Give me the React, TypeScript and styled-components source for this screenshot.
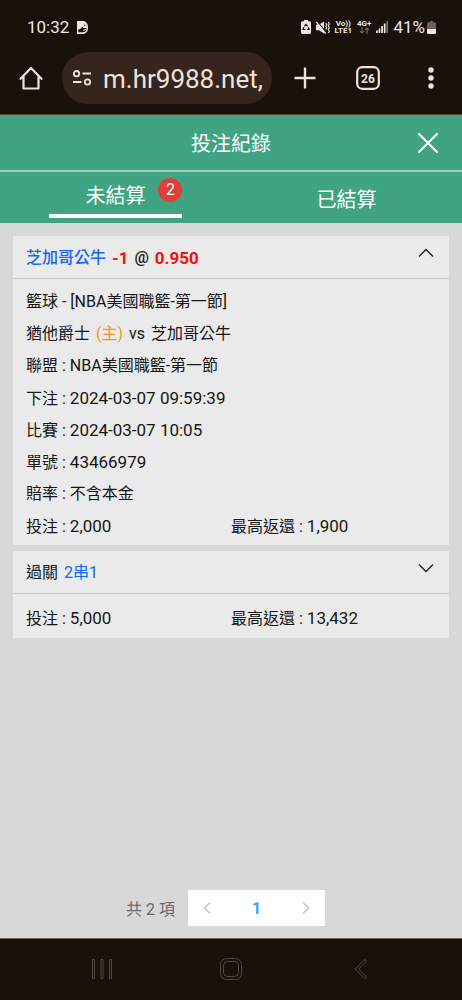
import React, { useState } from "react";
import styled, { createGlobalStyle } from "styled-components";

const colors = {
  bar: "#1a110b",
  pill: "#36251d",
  barText: "#efe2dc",
  green: "#40a381",
  page: "#d8d8d8",
  card: "#eaeaea",
  line: "#cbcbcb",
  blue: "#1467f5",
  red: "#fb0d0d",
  orange: "#ff920f",
};

const GlobalStyle = createGlobalStyle`
  * { box-sizing: border-box; }
  body {
    margin: 0;
    background: ${colors.page};
    color: #161616;
    font-family: Roboto, "Noto Sans CJK TC", sans-serif;
    font-size: 16px;
  }
  button, input { font-family: inherit; }
`;

const Screen = styled.div`
  display: flex;
  flex-direction: column;
  min-height: 100vh;
`;

const PlainButton = styled.button`
  display: flex;
  align-items: center;
  justify-content: center;
  padding: 0;
  border: 0;
  background: none;
  color: inherit;
  cursor: pointer;
`;

/* Phone status bar */
const StatusBar = styled.div`
  display: flex;
  align-items: center;
  justify-content: space-between;
  height: 52px;
  padding: 2px 26px 0 27px;
  background: ${colors.bar};
  color: #ece8e6;
  font-size: 17px;
`;

const StatusGroup = styled.div<{ $gap: number }>`
  display: flex;
  align-items: center;
  gap: ${(p) => p.$gap}px;
`;

const Network = styled.div`
  display: flex;
  flex-direction: column;
  align-items: center;
  font-size: 8px;
  font-weight: 700;
  line-height: 7px;
`;

const Battery = styled.div`
  display: flex;
  align-items: center;
  gap: 2px;
`;

/* Browser toolbar */
const Toolbar = styled.div`
  display: flex;
  align-items: center;
  padding: 0 11px 10px;
  border-bottom: 1px solid #5b463a;
  background: ${colors.bar};
  color: ${colors.barText};
`;

const ToolButton = styled(PlainButton)`
  width: 40px;
  height: 40px;
  flex: none;
`;

const AddressPill = styled.label`
  display: flex;
  align-items: center;
  flex: 1;
  min-width: 0;
  gap: 11px;
  height: 52px;
  margin: 0 13px 0 11px;
  padding: 0 9px 0 10px;
  border-radius: 26px;
  background: ${colors.pill};
`;

const Address = styled.input`
  flex: 1;
  min-width: 0;
  height: 40px;
  padding: 2px 0 0;
  border: 0;
  outline: 0;
  background: none;
  color: inherit;
  font-size: 26px;
`;

const ToolActions = styled.div`
  display: flex;
  gap: 23px;
`;

/* Page header and tabs */
const Header = styled.header`
  display: grid;
  grid-template-columns: 48px 1fr 48px;
  align-items: center;
  height: 57px;
  padding: 0 10px;
  border-bottom: 2px solid #a0cfbd;
  background: ${colors.green};
  color: #fff;
`;

const Title = styled.h1`
  grid-column: 2;
  margin: 0;
  padding-top: 2px;
  font-size: 20px;
  font-weight: 400;
  line-height: 30px;
  text-align: center;
`;

const CloseButton = styled(PlainButton)`
  height: 40px;
`;

const Tabs = styled.div`
  display: flex;
  height: 51px;
  background: ${colors.green};
`;

const Tab = styled(PlainButton)`
  flex: 1;
  color: #fff;
  font-size: 20px;
`;

const TabLabel = styled.span<{ $active: boolean }>`
  position: relative;
  width: 58%;
  padding: ${(p) => (p.$active ? "2px 0" : "4px 0 0")};
  border-bottom: ${(p) => (p.$active ? "4px solid #fff" : "0")};
  line-height: 32px;
`;

const Badge = styled.span`
  position: absolute;
  top: 0;
  right: 0;
  width: 24px;
  height: 24px;
  border-radius: 50%;
  background: #df3f3b;
  font-size: 16px;
  line-height: 24px;
  text-align: center;
`;

/* Bet cards */
const Content = styled.main`
  display: flex;
  flex: 1;
  flex-direction: column;
  gap: 6px;
  padding: 13px 13px 12px;
`;

const Card = styled.article`
  background: ${colors.card};
`;

const CardHead = styled.div`
  display: flex;
  align-items: center;
  justify-content: space-between;
  height: 43px;
  padding: 2px 13px 0;
  border-bottom: 1px solid ${colors.line};
`;

const Words = styled.div`
  display: flex;
  gap: 6px;
  line-height: 32px;
`;

const Word = styled.span<{ $color?: string; $weight?: number; $large?: boolean }>`
  color: ${(p) => p.$color ?? "inherit"};
  font-size: ${(p) => (p.$large ? 17 : 16)}px;
  font-weight: ${(p) => p.$weight ?? 400};
`;

const Value = styled.span`
  font-size: 17px;
`;

const Toggle = styled(PlainButton)`
  height: 32px;
  padding: 0 2px 10px;
`;

const CardBody = styled.div<{ $compact?: boolean }>`
  padding: ${(p) => (p.$compact ? "8px 13px 4px" : "7px 13px 3px")};
  line-height: 32px;
`;

const Line = styled.div`
  height: 32px;
`;

const Amounts = styled.div`
  display: grid;
  grid-template-columns: 1fr 1fr;
  height: 32px;
`;

const Pagination = styled.nav`
  display: flex;
  align-items: center;
  justify-content: center;
  gap: 13px;
  margin-top: auto;
  padding-right: 11px;
  color: #68696c;
`;

const Pager = styled.div`
  display: flex;
  height: 36px;
  background: #fff;
`;

const PageButton = styled(PlainButton)<{ $current?: boolean }>`
  width: ${(p) => (p.$current ? 61 : 38)}px;
  color: ${(p) => (p.$current ? "#409eff" : "#c0c4cc")};
  font-size: 16px;
  font-weight: 700;
`;

/* Phone navigation bar */
const NavBar = styled.nav`
  display: flex;
  align-items: center;
  height: 62px;
  padding: 0 37px 2px;
  border-top: 1px solid #6f625b;
  background: ${colors.bar};
  color: #51483f;
`;

const NavButton = styled(PlainButton)`
  flex: 1;
  height: 40px;
`;

const Chevron = ({ up }: { up: boolean }) => (
  <svg width="16" height="10" viewBox="0 0 16 10" fill="none" stroke="#222" strokeWidth="1.4">
    <path d={up ? "M1 8.5 8 1.5l7 7" : "M1 1.5l7 7 7-7"} />
  </svg>
);

const Arrow = ({ right }: { right?: boolean }) => (
  <svg width="8" height="14" viewBox="0 0 8 14" fill="none" stroke="currentColor" strokeWidth="1.5">
    <path d={right ? "M1 1.5 6.5 7 1 12.5" : "M7 1.5 1.5 7 7 12.5"} />
  </svg>
);

interface TitleWord {
  text: string;
  color?: string;
  weight?: number;
  large?: boolean;
}

interface Bet {
  title: TitleWord[];
  stake: string;
  maxReturn: string;
}

const bets: Bet[] = [
  {
    title: [
      { text: "芝加哥公牛", color: colors.blue, weight: 500 },
      { text: "-1", color: colors.red, weight: 700, large: true },
      { text: "@", weight: 500 },
      { text: "0.950", color: colors.red, weight: 700, large: true },
    ],
    stake: "2,000",
    maxReturn: "1,900",
  },
  {
    title: [{ text: "過關" }, { text: "2串1", color: colors.blue }],
    stake: "5,000",
    maxReturn: "13,432",
  },
];

const BetDetails = () => (
  <>
    <Line>籃球 - [NBA美國職籃-第一節]</Line>
    <Words>
      <Word>猶他爵士</Word>
      <Word $color={colors.orange}>(主)</Word>
      <Word>vs</Word>
      <Word>芝加哥公牛</Word>
    </Words>
    <Line>聯盟 : NBA美國職籃-第一節</Line>
    <Line>下注 : <Value>2024-03-07 09:59:39</Value></Line>
    <Line>比賽 : <Value>2024-03-07 10:05</Value></Line>
    <Line>單號 : <Value>43466979</Value></Line>
    <Line>賠率 : 不含本金</Line>
  </>
);

const BetCard = ({ bet, initiallyOpen }: { bet: Bet; initiallyOpen: boolean }) => {
  const [open, setOpen] = useState(initiallyOpen);
  return (
    <Card>
      <CardHead>
        <Words>
          {bet.title.map((w) => (
            <Word key={w.text} $color={w.color} $weight={w.weight} $large={w.large}>
              {w.text}
            </Word>
          ))}
        </Words>
        <Toggle aria-label="詳細" aria-expanded={open} onClick={() => setOpen(!open)}>
          <Chevron up={open} />
        </Toggle>
      </CardHead>
      <CardBody $compact={!open}>
        {open && <BetDetails />}
        <Amounts>
          <span>投注 : <Value>{bet.stake}</Value></span>
          <span>最高返還 : <Value>{bet.maxReturn}</Value></span>
        </Amounts>
      </CardBody>
    </Card>
  );
};

const StatusIcons = () => (
  <StatusGroup $gap={5}>
    <svg width="10" height="14" viewBox="0 0 10 14">
      <path fill="#ece8e6" d="M3 0h4v1.3h1.5Q10 1.3 10 2.8v9.5Q10 14 8.5 14h-7Q0 14 0 12.3V2.8Q0 1.3 1.5 1.3H3z" />
      <path d="M3.500 6.300 5 4.300l1.500 2M7.300 7.300l.8 2.200H6M4.500 9.500H2l.8-2.200" fill="none" stroke={colors.bar} strokeWidth="1.200" />
    </svg>
    <svg width="14" height="13" viewBox="0 0 14 13">
      <path fill="#ece8e6" d="M0 3.800h3L8 .5v12L3 9.200H0z" />
      <path d="M1 .3l9.500 11.400" stroke={colors.bar} strokeWidth="1.200" />
      <path d="M.3 1l9.300 11.500" stroke="#ece8e6" strokeWidth="1.300" />
      <path d="M9.800 2l1 1.600-1 1.600 1 1.600-1 1.600M12.300 1l1 1.900-1 1.900 1 1.900-1 1.900 1 1.900-1 1.500" fill="none" stroke="#ece8e6" strokeWidth="1.100" />
    </svg>
    <Network>
      <span>Vo))</span>
      <span>LTE1</span>
    </Network>
    <Network>
      <span>4G+</span>
      <svg width="11" height="7" viewBox="0 0 11 7" fill="none" stroke="#85807c" strokeWidth="1">
        <path d="M3 0v6M.8 4 3 6.200 5.200 4M8 7V1M5.800 3 8 .8 10.200 3" />
      </svg>
    </Network>
    <svg width="12" height="12" viewBox="0 0 12 12" fill="#ece8e6">
      <path d="M0 9.500h1.700V12H0zM2.600 7.500h1.700V12H2.600zM5.200 5h1.700v7H5.200zM7.800 2.500h1.700V12H7.800z" />
      <path d="M10.300 0H12v12h-1.700z" fill="#77706c" />
    </svg>
    <Battery>
      <span>41%</span>
      <svg width="9" height="13" viewBox="0 0 9 13">
        <path fill="#6b625d" d="M3 0h3v1.300h1.500Q9 1.300 9 2.800V8H0V2.800Q0 1.300 1.500 1.300H3z" />
        <path fill="#ece8e6" d="M0 8h9v3.500Q9 13 7.500 13h-6Q0 13 0 11.500z" />
      </svg>
    </Battery>
  </StatusGroup>
);

export default function App() {
  const [tab, setTab] = useState(0);
  return (
    <Screen>
      <GlobalStyle />
      <StatusBar>
        <StatusGroup $gap={8}>
          <span>10:32</span>
          <svg width="11" height="13" viewBox="0 0 11 13">
            <path fill="#ece8e6" d="M0 0h7q4 1.500 4 6.500T7 13H0z" />
            <path d="M1.300 11.300V8.500Q4 8 5.500 5.500l1 1.500h3Q9.500 11.300 6 11.300z" fill={colors.bar} />
            <path d="M7.800 3.500v1.200" stroke={colors.bar} fill="none" />
            <path d="M6 9.300q2 .5 2.500-1.300" stroke="#ece8e6" fill="none" />
          </svg>
        </StatusGroup>
        <StatusIcons />
      </StatusBar>

      <Toolbar>
        <ToolButton aria-label="Home">
          <svg width="24" height="24" viewBox="0 0 24 24" fill="none" stroke="currentColor" strokeWidth="2.200" strokeLinejoin="round" strokeLinecap="round">
            <path d="M1.500 12.800 12 2l10.500 10.800M4.500 10.500V22.500h15V10.500" />
          </svg>
        </ToolButton>
        <AddressPill>
          <svg width="20" height="16" viewBox="0 0 20 16" fill="none" stroke="currentColor" strokeWidth="1.800">
            <circle cx="4.500" cy="3.700" r="2.700" />
            <path d="M10.500 3.500h8.500M1 12h8.500" />
            <circle cx="15.500" cy="12" r="2.700" />
          </svg>
          <Address aria-label="Address" defaultValue="m.hr9988.net," />
        </AddressPill>
        <ToolActions>
          <ToolButton aria-label="New tab">
            <svg width="22" height="22" viewBox="0 0 22 22" stroke="currentColor" strokeWidth="2.400">
              <path d="M11 .5v21M.5 11h21" />
            </svg>
          </ToolButton>
          <ToolButton aria-label="Tabs">
            <svg width="24" height="24" viewBox="0 0 24 24">
              <rect x="1.200" y="1.200" width="21.600" height="21.600" rx="5" fill="none" stroke="currentColor" strokeWidth="2.200" />
              <text x="12" y="16.500" textAnchor="middle" fill="currentColor" fontSize="12" fontWeight="700">26</text>
            </svg>
          </ToolButton>
          <ToolButton aria-label="Menu">
            <svg width="6" height="22" viewBox="0 0 6 22" fill="currentColor">
              <circle cx="3" cy="3" r="2.700" />
              <circle cx="3" cy="11" r="2.700" />
              <circle cx="3" cy="19" r="2.700" />
            </svg>
          </ToolButton>
        </ToolActions>
      </Toolbar>

      <Header>
        <Title>投注紀錄</Title>
        <CloseButton aria-label="關閉">
          <svg width="20" height="20" viewBox="0 0 20 20" stroke="currentColor" strokeWidth="2" strokeLinecap="round">
            <path d="M1 1l18 18M19 1 1 19" />
          </svg>
        </CloseButton>
      </Header>
      <Tabs role="tablist">
        <Tab role="tab" aria-selected={tab === 0} onClick={() => setTab(0)}>
          <TabLabel $active={tab === 0}>
            未結算
            <Badge>2</Badge>
          </TabLabel>
        </Tab>
        <Tab role="tab" aria-selected={tab === 1} onClick={() => setTab(1)}>
          <TabLabel $active={tab === 1}>已結算</TabLabel>
        </Tab>
      </Tabs>

      <Content>
        {tab === 0 && bets.map((bet, i) => (
          <BetCard key={bet.stake} bet={bet} initiallyOpen={i === 0} />
        ))}
        <Pagination>
          <span>共 2 項</span>
          <Pager>
            <PageButton aria-label="上一頁"><Arrow /></PageButton>
            <PageButton $current aria-current="page">1</PageButton>
            <PageButton aria-label="下一頁"><Arrow right /></PageButton>
          </Pager>
        </Pagination>
      </Content>

      <NavBar>
        <NavButton aria-label="Recent apps">
          <svg width="20" height="20" viewBox="0 0 20 20" fill="none" stroke="currentColor">
            <path d="M.5.5h2v19h-2zM9 .5h2v19H9zM17.500.5h2v19h-2z" />
          </svg>
        </NavButton>
        <NavButton aria-label="Home screen">
          <svg width="22" height="22" viewBox="0 0 22 22" fill="none" stroke="currentColor">
            <rect x=".5" y=".5" width="21" height="21" rx="6" />
            <rect x="3.500" y="3.500" width="15" height="15" rx="4" />
          </svg>
        </NavButton>
        <NavButton aria-label="Back">
          <svg width="13" height="20" viewBox="0 0 13 20" fill="none" stroke="currentColor">
            <path d="M10.500.7 1 10l9.500 9.300q1.700 0 1.700-1.600L4.500 10l7.700-7.700Q12.200.7 10.500.7z" />
          </svg>
        </NavButton>
      </NavBar>
    </Screen>
  );
}
